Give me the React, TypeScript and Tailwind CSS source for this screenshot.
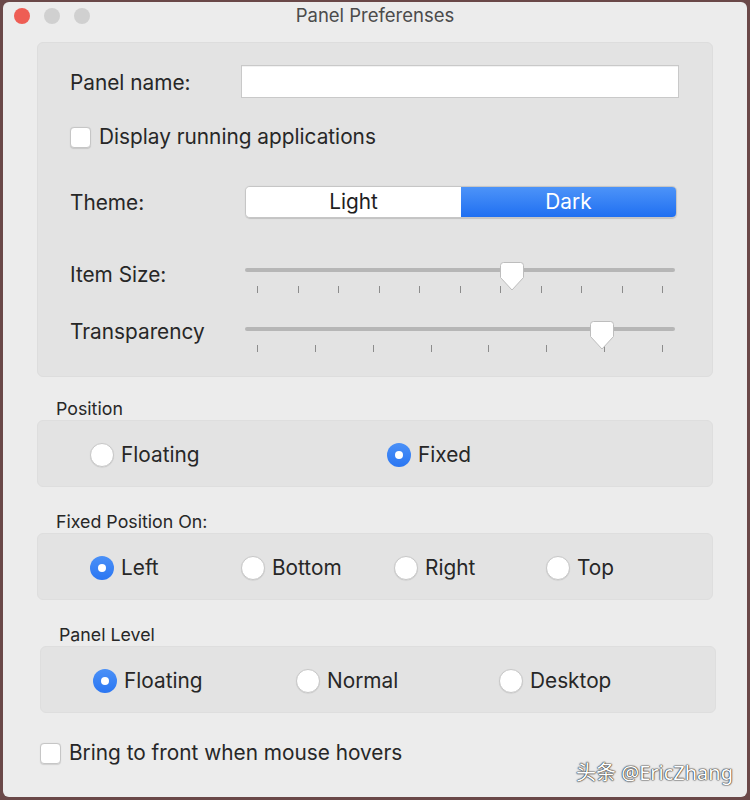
import React from 'react';

const font = { fontFamily: 'Inter, "Noto Sans", sans-serif' };

function Checkbox({ label }: { label: string }) {
  return (
    <div className="flex h-[24px] items-center">
      <span className="h-[21px] w-[21px] rounded-[4px] border border-[#c6c6c6] bg-white shadow-[0_0.5px_1px_rgba(0,0,0,0.12)]" />
      <span className="ml-[8px] text-[20.8px] leading-[24px] text-[#272727]">{label}</span>
    </div>
  );
}

function Radio({ label, checked }: { label: string; checked?: boolean }) {
  return (
    <div className="flex items-center">
      {checked ? (
        <span className="flex h-[24px] w-[24px] items-center justify-center rounded-full bg-gradient-to-b from-[#4a90f7] to-[#2a76f2]">
          <span className="h-[8px] w-[8px] rounded-full bg-white" />
        </span>
      ) : (
        <span className="h-[24px] w-[24px] rounded-full border border-[#c8c8c8] bg-white shadow-[0_0.5px_1px_rgba(0,0,0,0.12)]" />
      )}
      <span className="ml-[7px] text-[20.8px] leading-[24px] text-[#272727]">{label}</span>
    </div>
  );
}

interface SliderProps {
  label: string;
  ticks: number;
  value: number; // 0..1
  labelClass: string;
}

function SliderRow({ label, ticks, value, labelClass }: SliderProps) {
  const usable = 406;
  return (
    <div className="flex h-[40px] items-start">
      <div className={`w-[175px] text-[20.8px] leading-[24px] text-[#272727] ${labelClass}`}>{label}</div>
      <div className="relative h-[40px] w-[430px]">
        <div className="mt-[10px] h-[4px] rounded-full bg-[#b6b6b6]" />
        <div className="mt-[14px] flex justify-between px-[12px]">
          {Array.from({ length: ticks }).map((_, i) => (
            <span key={i} className="h-[7px] w-px bg-[#8c8c8c]" />
          ))}
        </div>
        {/* thumb sits over the track */}
        <svg
          className="absolute top-[4px]"
          style={{ left: value * usable }}
          width="24"
          height="29"
          viewBox="0 0 24 29"
        >
          <path
            d="M3.5 0.5 H20.5 A3 3 0 0 1 23.5 3.5 V15.5 L12 28 L0.5 15.5 V3.5 A3 3 0 0 1 3.5 0.5 Z"
            fill="#ffffff"
            stroke="#bdbdbd"
          />
        </svg>
      </div>
    </div>
  );
}

export default function App() {
  return (
    <div className="relative h-[800px] w-[750px] overflow-hidden bg-[#6a4848]" style={font}>
      <div className="ml-[3px] mt-[2px] flex h-[795px] w-[744px] flex-col rounded-[6px] bg-[#ececec]">
        {/* title bar */}
        <div className="grid h-[26px] grid-cols-[1fr_auto_1fr] items-center">
          <div className="flex items-center gap-[14px] pl-[11px] pt-[1px]">
            <span className="h-[16px] w-[16px] rounded-full bg-[#ee5d54]" />
            <span className="h-[16px] w-[16px] rounded-full bg-[#d0d0d0]" />
            <span className="h-[16px] w-[16px] rounded-full bg-[#d0d0d0]" />
          </div>
          <div className="text-[18.5px] leading-[24px] text-[#4b4b4b]">Panel Preferenses</div>
          <div />
        </div>

        {/* main group */}
        <div className="ml-[34px] mt-[14px] w-[676px] rounded-[6px] border border-[#dddddd] bg-[#e3e3e3] pb-[19px] pl-[32px] pt-[22px]">
          <div className="flex h-[33px] items-center">
            <div className="w-[171px] pt-[3px] text-[20.8px] leading-[24px] text-[#272727]">Panel name:</div>
            <div className="h-[33px] w-[438px] border border-[#c9c9c9] bg-white shadow-[inset_0_1px_0_rgba(0,0,0,0.05)]" />
          </div>

          <div className="mt-[27px]">
            <Checkbox label="Display running applications" />
          </div>

          <div className="mt-[37px] flex h-[32px] items-center">
            <div className="w-[175px] pt-[2px] text-[20.8px] leading-[24px] text-[#272727]">Theme:</div>
            <div className="flex h-[32px] w-[432px] overflow-hidden rounded-[5px] border border-[#c6c6c6] shadow-[0_0.5px_1px_rgba(0,0,0,0.15)]">
              <div className="flex flex-1 items-center justify-center bg-white text-[20.8px] text-[#1e1e1e]">Light</div>
              <div className="flex flex-1 items-center justify-center bg-gradient-to-b from-[#4c93f8] to-[#1f6ff1] text-[20.8px] text-white">
                Dark
              </div>
            </div>
          </div>

          <div className="mt-[40px]">
            <SliderRow label="Item Size:" ticks={11} value={0.628} labelClass="mt-[5px]" />
          </div>
          <div className="mt-[19px]">
            <SliderRow label="Transparency" ticks={8} value={0.85} labelClass="mt-[3px]" />
          </div>
        </div>

        {/* Position */}
        <div className="ml-[53px] mt-[22px] text-[17.8px] leading-[20px] text-[#272727]">Position</div>
        <div className="ml-[34px] mt-[1px] flex h-[67px] w-[676px] items-center rounded-[6px] border border-[#dedede] bg-[#e3e3e3] pl-[52px] pt-[3px]">
          <div className="w-[297px]">
            <Radio label="Floating" />
          </div>
          <Radio label="Fixed" checked />
        </div>

        {/* Fixed Position On */}
        <div className="ml-[53px] mt-[25px] text-[17.8px] leading-[20px] text-[#272727]">Fixed Position On:</div>
        <div className="ml-[34px] mt-[1px] flex h-[67px] w-[676px] items-center rounded-[6px] border border-[#dedede] bg-[#e3e3e3] pl-[52px] pt-[2px]">
          <div className="w-[151px]">
            <Radio label="Left" checked />
          </div>
          <div className="w-[153px]">
            <Radio label="Bottom" />
          </div>
          <div className="w-[152px]">
            <Radio label="Right" />
          </div>
          <Radio label="Top" />
        </div>

        {/* Panel Level */}
        <div className="ml-[56px] mt-[25px] text-[17.8px] leading-[20px] text-[#272727]">Panel Level</div>
        <div className="ml-[37px] mt-[1px] flex h-[67px] w-[676px] items-center rounded-[6px] border border-[#dedede] bg-[#e3e3e3] pl-[52px] pt-[2px]">
          <div className="w-[203px]">
            <Radio label="Floating" checked />
          </div>
          <div className="w-[203px]">
            <Radio label="Normal" />
          </div>
          <Radio label="Desktop" />
        </div>

        <div className="ml-[37px] mt-[28px]">
          <Checkbox label="Bring to front when mouse hovers" />
        </div>
      </div>

      {/* watermark overlay */}
      <div
        className="absolute bottom-[15px] right-[17px] text-[20px] leading-[24px] text-white [text-shadow:0_0_1px_#222,0_0_1px_#222,0_0_2px_#444]"
        style={{ fontFamily: '"Noto Sans", "Noto Sans CJK SC", sans-serif' }}
      >
        头条 @EricZhang
      </div>
    </div>
  );
}
